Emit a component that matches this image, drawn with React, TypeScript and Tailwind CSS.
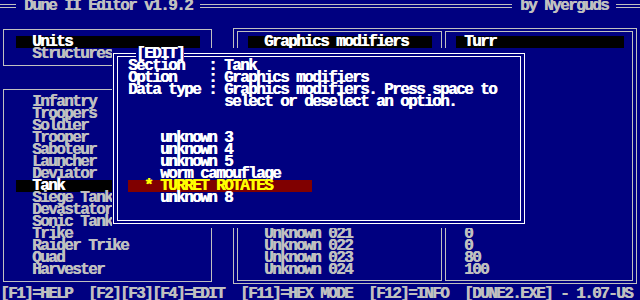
const units = [
  "Infantry",
  "Troopers",
  "Soldier",
  "Trooper",
  "Saboteur",
  "Launcher",
  "Deviator",
  "Tank",
  "Siege Tank",
  "Devastator",
  "Sonic Tank",
  "Trike",
  "Raider Trike",
  "Quad",
  "Harvester",
];

const unknownRows = [
  { name: "Unknown 021", value: "0" },
  { name: "Unknown 022", value: "0" },
  { name: "Unknown 023", value: "80" },
  { name: "Unknown 024", value: "100" },
];

// row-start classes written out so tailwind picks them up
const listRows = [
  "row-start-9",
  "row-start-10",
  "row-start-11",
  "row-start-12",
  "row-start-13",
  "row-start-14",
  "row-start-15",
  "row-start-16",
  "row-start-17",
  "row-start-18",
  "row-start-19",
  "row-start-20",
  "row-start-21",
  "row-start-22",
  "row-start-23",
];
const unknownRowClasses = ["row-start-20", "row-start-21", "row-start-22", "row-start-23"];

function EditDialog() {
  return (
    <div className="col-start-15 col-span-52 row-start-5 row-span-15 grid grid-cols-[repeat(52,8px)] grid-rows-[repeat(15,12px)] bg-[#000080] text-white">
      <div className="col-start-1 col-span-52 row-start-1 row-span-15 ml-[1px] mr-[3px] mt-[5px] mb-[4px] border border-white px-[3px] py-[2px]">
        <div className="h-full w-full border border-white" />
      </div>
      <div className="col-start-4 col-span-6 row-start-1 bg-[#000080] whitespace-pre">[EDIT]</div>
      <div className="col-start-3 col-span-30 row-start-2 whitespace-pre">Section   : Tank</div>
      <div className="col-start-3 col-span-30 row-start-3 whitespace-pre">Option    : Graphics modifiers</div>
      <div className="col-start-3 col-span-46 row-start-4 whitespace-pre">Data type : Graphics modifiers. Press space to</div>
      <div className="col-start-15 col-span-30 row-start-5 whitespace-pre">select or deselect an option.</div>
      <div className="col-start-7 col-span-20 row-start-8 whitespace-pre">unknown 3</div>
      <div className="col-start-7 col-span-20 row-start-9 whitespace-pre">unknown 4</div>
      <div className="col-start-7 col-span-20 row-start-10 whitespace-pre">unknown 5</div>
      <div className="col-start-7 col-span-20 row-start-11 whitespace-pre">worm camouflage</div>
      <div className="col-start-3 col-span-23 row-start-12 bg-[#800000] pl-[16px] text-[#ffff00] whitespace-pre">
        * TURRET ROTATES
      </div>
      <div className="col-start-7 col-span-20 row-start-13 whitespace-pre">unknown 8</div>
    </div>
  );
}

export default function App() {
  return (
    <div className="grid h-[300px] w-[640px] grid-cols-[repeat(80,8px)] grid-rows-[repeat(25,12px)] overflow-hidden bg-[#000080] font-['Liberation_Mono',monospace] text-[16px] leading-[12px] font-bold tracking-[-1.6px] text-[#c0c0c0] [text-shadow:0.5px_0_0_currentColor]">
      {/* title bar */}
      <div className="col-start-1 col-span-2 row-start-1 mt-[4px] h-[4px] self-start border-y border-[#c0c0c0]" />
      <div className="col-start-4 col-span-21 row-start-1 whitespace-pre">Dune II Editor v1.9.2</div>
      <div className="col-start-26 col-span-39 row-start-1 mt-[4px] h-[4px] self-start border-y border-[#c0c0c0]" />
      <div className="col-start-66 col-span-11 row-start-1 whitespace-pre">by Nyerguds</div>
      <div className="col-start-78 col-span-3 row-start-1 mt-[4px] h-[4px] self-start border-y border-[#c0c0c0]" />

      {/* section panel */}
      <div className="col-start-1 col-span-27 row-start-3 row-span-4 ml-[3px] mr-[4px] mt-[5px] mb-[6px] border border-[#c0c0c0]" />
      <div className="col-start-3 col-span-23 row-start-4 bg-black pl-[16px] text-white whitespace-pre">Units</div>
      <div className="col-start-5 col-span-20 row-start-5 whitespace-pre">Structures</div>

      {/* unit list panel */}
      <div className="col-start-1 col-span-27 row-start-8 row-span-17 ml-[3px] mr-[4px] mt-[5px] mb-[6px] border border-[#c0c0c0]" />
      {units.map((u, i) =>
        u === "Tank" ? (
          <div key={u} className={`col-start-3 col-span-23 ${listRows[i]} bg-black pl-[16px] text-white whitespace-pre`}>
            {u}
          </div>
        ) : (
          <div key={u} className={`col-start-5 col-span-20 ${listRows[i]} whitespace-pre`}>
            {u}
          </div>
        )
      )}

      {/* options / values panel */}
      <div className="col-start-30 col-span-51 row-start-3 row-span-22 ml-[1px] mr-[3px] mt-[4px] mb-[4px] border border-[#c0c0c0] px-[3px] py-[2px]">
        <div className="h-full w-full border border-[#c0c0c0]" />
      </div>
      <div className="col-start-56 row-start-3 row-span-22 ml-[1px] mt-[7px] mb-[7px] w-[5px] border-x border-[#c0c0c0] bg-[#000080]" />
      <div className="col-start-32 col-span-23 row-start-4 bg-black pl-[16px] text-white whitespace-pre">Graphics modifiers</div>
      <div className="col-start-58 col-span-21 row-start-4 bg-black pl-[8px] text-white whitespace-pre">Turr</div>
      {unknownRows.map((r, i) => (
        <div key={r.name} className="contents">
          <div className={`col-start-34 col-span-11 ${unknownRowClasses[i]} whitespace-pre`}>{r.name}</div>
          <div className={`col-start-59 col-span-6 ${unknownRowClasses[i]} whitespace-pre`}>{r.value}</div>
        </div>
      ))}

      <EditDialog />

      {/* key help */}
      <div className="col-start-1 col-span-80 row-start-25 whitespace-pre">
        [F1]=HELP  [F2][F3][F4]=EDIT  [F11]=HEX MODE  [F12]=INFO  [DUNE2.EXE] - 1.07-US
      </div>
    </div>
  );
}
